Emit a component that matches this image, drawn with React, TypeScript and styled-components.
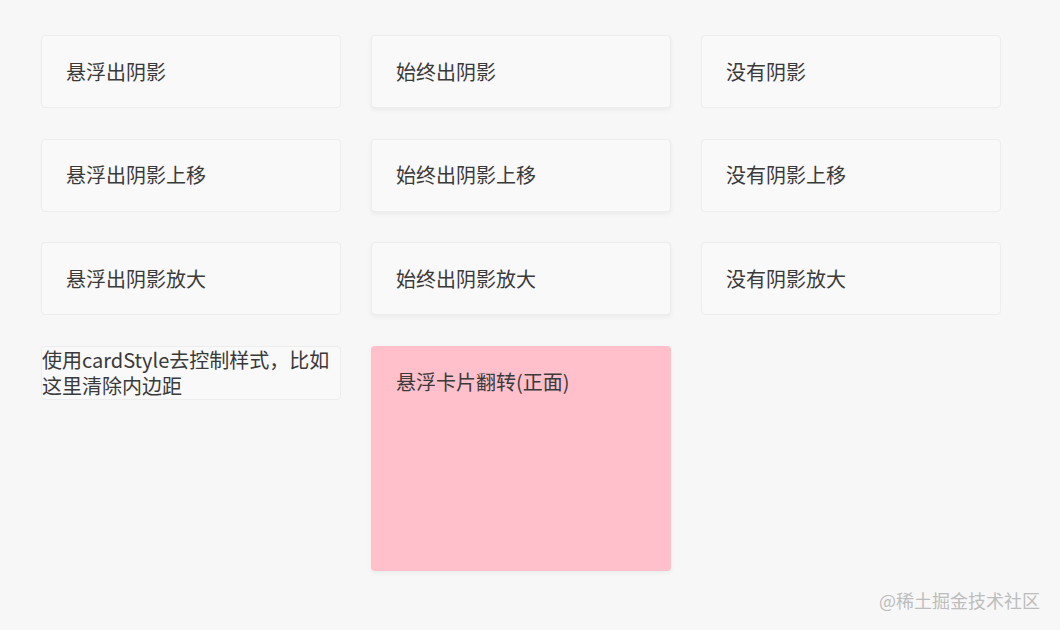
import React from 'react'
import styled, { createGlobalStyle, css } from 'styled-components'

const GlobalStyle = createGlobalStyle`
    html, body {
        margin: 0;
        padding: 0;
        background: #f7f7f7;
        font-family: "Microsoft YaHei", "Noto Sans CJK SC", "Liberation Sans", sans-serif;
    }
`

type Variant = 'hover' | 'always' | 'none'

const Page = styled.div`
    position: relative;
    width: 1060px;
    height: 630px;
    box-sizing: border-box;
    padding: 35px 0 0 41px;
`

const Grid = styled.div`
    display: grid;
    grid-template-columns: repeat(3, 300px);
    column-gap: 30px;
    row-gap: 30.5px;
    align-items: start;
`

const Card = styled.div<{ $variant: Variant; $bare?: boolean; $bg?: string; $tall?: boolean }>`
    box-sizing: border-box;
    background: ${({ $bg }) => $bg || '#f9f9f9'};
    border: 1px solid ${({ $bg }) => ($bg ? 'transparent' : '#ededed')};
    border-radius: 4px;
    padding: ${({ $bare }) => ($bare ? '0' : '22.5px 24px')};
    color: #3a3a3a;
    font-size: 20px;
    line-height: 26px;
    min-height: ${({ $tall }) => ($tall ? '225px' : 'auto')};
    ${({ $variant }) =>
        $variant === 'always' &&
        css`
            box-shadow: 0 2px 5px rgba(0, 0, 0, 0.05);
        `}
    transition: box-shadow 0.2s, transform 0.2s;
    ${({ $variant }) =>
        $variant === 'hover' &&
        css`
            &:hover {
                box-shadow: 0 2px 6px rgba(0, 0, 0, 0.1);
            }
        `}
`

const Watermark = styled.div`
    position: absolute;
    right: 20px;
    bottom: 17px;
    font-size: 18px;
    color: #bdbdbd;
`

const rows: { label: string; variant: Variant }[][] = [
    [
        { label: '悬浮出阴影', variant: 'hover' },
        { label: '始终出阴影', variant: 'always' },
        { label: '没有阴影', variant: 'none' },
    ],
    [
        { label: '悬浮出阴影上移', variant: 'hover' },
        { label: '始终出阴影上移', variant: 'always' },
        { label: '没有阴影上移', variant: 'none' },
    ],
    [
        { label: '悬浮出阴影放大', variant: 'hover' },
        { label: '始终出阴影放大', variant: 'always' },
        { label: '没有阴影放大', variant: 'none' },
    ],
]

const App: React.FC = () => {
    return (
        <Page>
            <GlobalStyle />
            <Grid>
                {rows.flat().map((c) => (
                    <Card key={c.label} $variant={c.variant}>
                        {c.label}
                    </Card>
                ))}
                <Card $variant="none" $bare>
                    使用cardStyle去控制样式，比如这里清除内边距
                </Card>
                <Card $variant="always" $bg="#ffc0cb" $tall>
                    悬浮卡片翻转(正面)
                </Card>
            </Grid>
            <Watermark>@稀土掘金技术社区</Watermark>
        </Page>
    )
}

export default App
